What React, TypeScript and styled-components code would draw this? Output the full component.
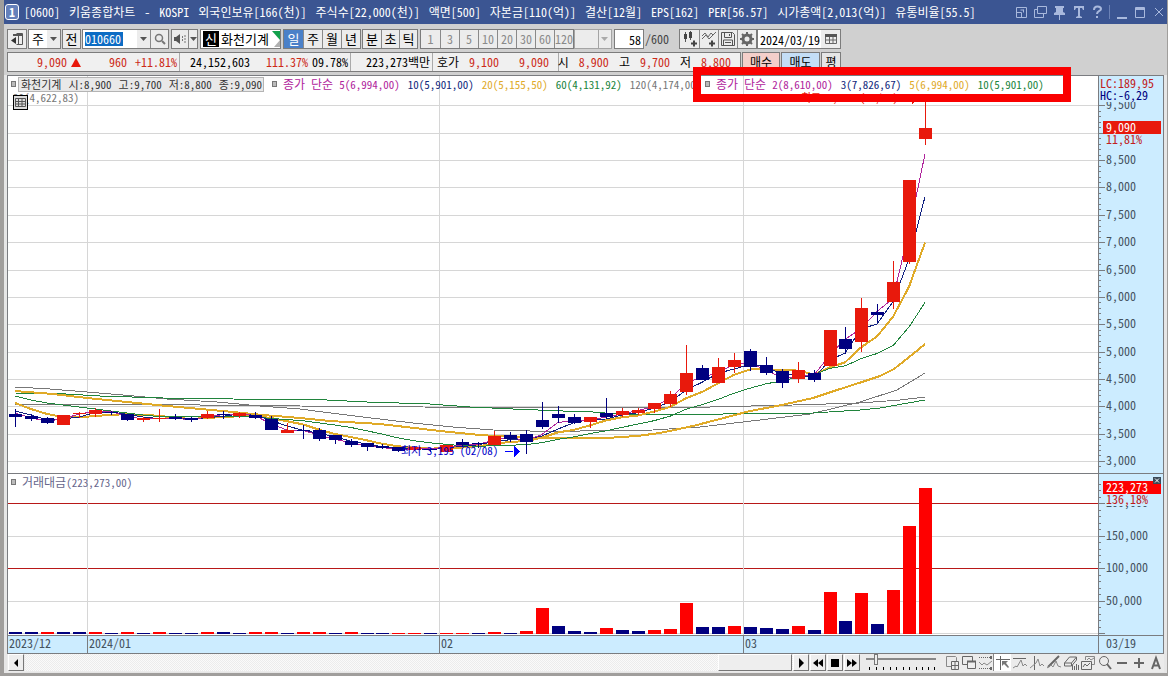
import React from 'react';
import styled, { createGlobalStyle } from 'styled-components';

const MONO = '"Noto Sans Mono CJK KR", "Noto Sans CJK KR", monospace';

const RED = '#e8190c';
const NAVY = '#000080';
const GOLD = '#e0aa28';
const GREEN = '#20843c';
const MAGENTA = '#b0249c';
const GRAY = '#777';
const SKY = '#ccecff';
const LINE = '#7a7c80';
const INK = '#44525e';

const Global = createGlobalStyle`
  *, *::before { box-sizing: border-box; }
  body { margin: 0; background: #a09e9c; font: 12px/16px ${MONO}; color: #000; }
  button, input, select { font: inherit; color: inherit; margin: 0; padding: 0; border: 0; border-radius: 0; }
  button { cursor: pointer; }
`;

const Window = styled.div`
  min-height: 100vh;
  display: flex;
  flex-direction: column;
  background: #e6e6e6;
  border: solid #a09e9c;
  border-width: 0 1px 3px 4px;
`;

/* ---------- title bar ---------- */

const TitleBar = styled.header`
  height: 24px;
  flex: none;
  display: flex;
  align-items: center;
  gap: 5px;
  padding: 0 0 0 1px;
  background: #3b5592;
  color: #fff;
`;

const Badge = styled.span`
  width: 14px;
  height: 16px;
  flex: none;
  border: 1px solid #fff;
  border-radius: 3px;
  background: #6480bb;
  font-weight: 700;
  line-height: 13px;
  text-align: center;
`;

const Title = styled.h1`
  flex: 1;
  min-width: 0;
  display: flex;
  gap: 9px;
  margin: 0;
  font-size: 12px;
  font-weight: 400;
  white-space: nowrap;
  overflow: hidden;
`;

const WindowButtons = styled.div`
  display: flex;
  align-items: center;
  gap: 4px;
`;

const WindowButton = styled.button`
  width: 15px;
  height: 16px;
  background: none;
  color: #a9b9dd;
  svg { display: block; width: 15px; height: 16px; }
`;

const TitleRule = styled.span`
  width: 1px;
  height: 14px;
  background: #6c82b6;
`;

/* ---------- tool bar ---------- */

const Tools = styled.div`
  flex: none;
  display: flex;
  flex-direction: column;
  gap: 3px;
  padding: 5px 3px 3px;
  background: #d0d0d0;
`;

const Bar = styled.div`
  display: flex;
  height: 20px;
`;

const Group = styled.div<{ $gap?: number }>`
  display: flex;
  flex: none;
  height: 20px;
  margin-right: ${p => p.$gap ?? 2}px;
  border: 1px solid #7c7c7c;
  background: #fff;
`;

const ToolButton = styled.button<{ $w: number; $on?: boolean; $dim?: boolean; $size?: number }>`
  width: ${p => p.$w}px;
  flex: none;
  height: 18px;
  display: flex;
  align-items: center;
  justify-content: center;
  overflow: hidden;
  background: ${p => (p.$on ? '#4a80c8' : '#ececec')};
  color: ${p => (p.$on ? '#fff' : p.$dim ? '#8a8a8a' : '#000')};
  font-size: ${p => p.$size ?? 12}px;
  line-height: 18px;
  & + & { border-left: 1px solid #8a8a8a; }
  svg { display: block; flex: none; }
`;

const Period = styled.span`
  width: 18px;
  text-align: center;
  font-size: 13px;
  line-height: 18px;
`;

const CodeInput = styled.input`
  width: 38px;
  height: 14px;
  margin: 2px 14px 2px 2px;
  background: #0c6cc4;
  color: #fff;
`;

const NewTag = styled.span`
  width: 16px;
  margin: 1px 2px;
  background: #000;
  color: #fff;
  font-size: 13px;
  line-height: 16px;
  text-align: center;
`;

const StockName = styled.span`
  width: 50px;
  font-size: 13px;
  line-height: 18px;
`;

const Corner = styled.svg`
  width: 9px;
  height: 18px;
`;

const EmptySelect = styled.select`
  width: 38px;
  height: 20px;
  appearance: none;
  flex: none;
  margin-right: 2px;
  border: 1px solid #a4a4a4;
  background: linear-gradient(#a4a4a4, #a4a4a4) 23px 0 / 1px 18px no-repeat, #ececec;
`;

const SelectWrap = styled.div`
  display: grid;
  flex: none;
  > * { grid-area: 1 / 1; }
  svg { align-self: center; justify-self: end; margin-right: 6px; pointer-events: none; }
`;

const CountInput = styled.input`
  width: 30px;
  flex: none;
  height: 20px;
  padding-right: 2px;
  border: 1px solid #7c7c7c;
  background: #fff;
  text-align: right;
`;

const Total = styled.span`
  width: 35px;
  flex: none;
  padding-left: 1px;
  color: #444;
  line-height: 20px;
`;

const DateInput = styled.input`
  width: 63px;
  height: 18px;
  padding-left: 2px;
  background: #fff;
`;

const Quotes = styled.dl`
  display: flex;
  flex: none;
  height: 20px;
  margin: 0 1px 0 0;
  border: 1px solid #7c7c7c;
  background: #f0f0f0;
`;

const QuoteCell = styled.div<{ $w: number; $gap?: number; $end?: number }>`
  width: ${p => p.$w}px;
  flex: none;
  display: flex;
  align-items: center;
  justify-content: flex-end;
  gap: ${p => p.$gap ?? 8}px;
  padding-right: ${p => p.$end ?? 2}px;
  & + & { border-left: 1px solid #aaa; }
  svg { margin: 0 20px 0 -4px; }
`;

const QuoteLabel = styled.dt`
  line-height: 18px;
`;

const QuoteValue = styled.dd<{ $up?: boolean; $w?: number }>`
  margin: 0;
  width: ${p => (p.$w ? `${p.$w}px` : 'auto')};
  text-align: right;
  white-space: nowrap;
  line-height: 18px;
  color: ${p => (p.$up ? '#cc2a18' : '#000')};
`;

const OrderButton = styled.button<{ $bg: string; $w: number }>`
  width: ${p => p.$w}px;
  height: 20px;
  margin-right: 1px;
  flex: none;
  border: 1px solid #7c7c7c;
  background: ${p => p.$bg};
`;

/* ---------- chart ---------- */

const Chart = styled.main`
  position: relative;
  flex: none;
  margin: 0 3px;
  display: grid;
  grid-template-columns: minmax(0, 1fr) 66px;
  border: solid ${LINE};
  border-width: 1px 0 0 1px;
`;

const Plot = styled.svg<{ $bg?: string }>`
  display: block;
  width: 100%;
  background: ${p => p.$bg ?? '#fff'};
  border-bottom: 1px solid ${LINE};
  shape-rendering: crispEdges;
  font-family: ${MONO};
`;

const Axis = styled(Plot)`
  background: ${SKY};
  border-left: 1px solid ${LINE};
  border-right: 1px solid ${LINE};
`;

const Legend = styled.div<{ $left: number; $top: number }>`
  position: absolute;
  left: ${p => p.$left}px;
  top: ${p => p.$top}px;
  height: 16px;
  display: flex;
  align-items: center;
  gap: 8px;
  font-size: 11px;
  white-space: nowrap;
`;

const LegendHead = styled.span<{ $c?: string }>`
  display: flex;
  align-items: center;
  gap: 6px;
  color: ${p => p.$c ?? '#000'};
  &::before { content: ''; width: 5px; height: 6px; border: 1px solid #777; background: #bbb; }
`;

const LegendName = styled.span`
  font-size: 12px;
`;

const LegendValue = styled.span<{ $c: string }>`
  color: ${p => p.$c};
`;

const Ohlc = styled.span`
  height: 15px;
  width: 246px;
  display: flex;
  gap: 7px;
  margin-left: -6px;
  padding-left: 2px;
  border: 1px solid #b4b4b4;
  background: #e9e9e9;
  color: #333;
  line-height: 13px;
`;

const TableToggle = styled.button`
  position: absolute;
  left: 5px;
  top: 19px;
  width: 15px;
  height: 15px;
  border: 1px solid #000;
  background: #dcdcdc;
  svg { display: block; }
`;

const Highlight = styled.div`
  position: absolute;
  left: 685px;
  top: -9px;
  width: 378px;
  height: 35px;
  border: 8px solid #fa0000;
`;

const CloseTiny = styled.button`
  position: absolute;
  right: 3px;
  top: 401px;
  width: 8px;
  height: 7px;
  background: #3c4a58;
  svg { display: block; }
`;

/* ---------- bottom bar ---------- */

const Footer = styled.footer`
  flex: none;
  height: 18px;
  margin: 0 3px;
  padding-left: 1px;
  display: flex;
  align-items: flex-start;
  background: #ebebeb;
`;

const StepButton = styled.button`
  width: 16px;
  height: 17px;
  flex: none;
  margin-right: 1px;
  display: grid;
  place-items: center;
  background: #eee;
  border: solid;
  border-width: 1px;
  border-color: #fff #777 #777 #fff;
`;

const Track = styled.div`
  flex: 1;
  height: 17px;
  display: flex;
  justify-content: flex-end;
  background: repeating-conic-gradient(#ececec 0 25%, #fafafa 0 50%) 0 0 / 2px 2px;
`;

const Thumb = styled.div`
  width: 74px;
  margin-right: 1px;
  background: #eee;
  border: solid;
  border-width: 1px;
  border-color: #fff #777 #777 #fff;
`;

const Zoomer = styled.label`
  width: 70px;
  margin: 0 7px 0 5px;
  display: flex;
  flex-direction: column;
  gap: 2px;
  svg { display: block; }
`;

const Range = styled.input`
  appearance: none;
  width: 70px;
  height: 11px;
  background: linear-gradient(#888, #888) 0 4px / 100% 2px no-repeat;
  &::-webkit-slider-thumb {
    appearance: none;
    width: 4px;
    height: 11px;
    border: 1px solid #777;
    background: #eee;
  }
`;

const IconStrip = styled.div`
  display: flex;
`;

const StripButton = styled.button<{ $on?: boolean }>`
  width: 17px;
  height: 17px;
  flex: none;
  display: grid;
  place-items: center;
  background: ${p => (p.$on ? '#fff' : 'none')};
  color: #666;
  box-shadow: ${p => (p.$on ? '-1px 0 #888' : 'none')};
`;

/* ---------- data ---------- */

// open/close edges and wick ends on the plot's vertical scale: [up, top, bottom, high, low]
const candles: [number, number, number, number, number][] = [
  [0, 414, 417, 409, 427], [0, 416, 419, 414, 421], [0, 418, 423, 417, 424], [1, 415, 425, 415, 425],
  [1, 413, 414, 412, 418], [1, 410, 414, 408, 417], [0, 412, 413, 411, 415], [0, 414, 420, 414, 421],
  [1, 418, 420, 417, 422], [1, 418, 419, 409, 422], [0, 417, 419, 414, 420], [0, 418, 420, 417, 422],
  [1, 414, 418, 411, 419], [0, 414, 415, 411, 419], [1, 413, 416, 412, 418], [0, 415, 418, 412, 419],
  [0, 419, 430, 416, 430], [1, 430, 433, 423, 433], [0, 430, 431, 425, 439], [0, 430, 439, 428, 441],
  [0, 435, 440, 435, 444], [0, 441, 445, 439, 447], [0, 443, 447, 443, 451], [0, 446, 448, 444, 449],
  [0, 447, 451, 447, 452], [1, 447, 450, 446, 451], [0, 449, 450, 448, 452], [1, 445, 452, 445, 452],
  [0, 442, 445, 439, 447], [0, 443, 444, 442, 448], [1, 436, 445, 431, 445], [0, 435, 439, 432, 442],
  [0, 434, 442, 430, 454], [0, 420, 427, 402, 429], [0, 414, 418, 406, 423], [0, 417, 423, 414, 424],
  [1, 417, 422, 417, 428], [0, 413, 417, 398, 419], [1, 411, 415, 408, 417], [1, 410, 413, 408, 415],
  [1, 403, 409, 403, 413], [1, 394, 404, 391, 407], [1, 373, 392, 345, 395], [0, 368, 380, 365, 380],
  [1, 367, 383, 358, 383], [1, 360, 367, 353, 373], [0, 351, 367, 349, 371], [0, 365, 373, 357, 375],
  [0, 371, 383, 369, 388], [1, 370, 379, 362, 383], [0, 373, 380, 370, 382], [1, 330, 366, 330, 366],
  [0, 339, 349, 327, 354], [1, 308, 342, 298, 352], [0, 312, 315, 304, 322], [1, 282, 302, 261, 309],
  [1, 180, 262, 180, 264], [1, 128, 139, 97, 145],
];

// negative heights are falling days
const volumes = [
  -2, -2, 2, -2, -2, 2, -1, 2, -1, 2, -1, -1, 2, -2, -1, 2, 2, -1, 2, 2, -1, 2, -1, -1, 1, 1, -1, 1, 1,
  -1, 2, -1, 3, 26, -8, -3, -2, 6, -4, -3, 4, 5, 31, -7, -7, 8, -7, -6, -5, 8, -4, 42, -13, 41, -10, 44,
  108, 146,
];

const cx = (i: number) => Math.round(15.3 + i * 15.965);
const closes = candles.map(([up, top, bottom]) => (up ? top : bottom));

const average = (n: number, lead: number[]) =>
  closes
    .map((_, i) => {
      const y = i < n - 1 ? lead[i] : closes.slice(i - n + 1, i + 1).reduce((a, b) => a + b, 0) / n;
      return `${cx(i)},${y.toFixed(1)}`;
    })
    .join(' ');

const ma2 = average(2, [413]);
const ma3 = average(3, [411, 415]);
const ma5 = average(5, [403, 409, 414, 417]);
const ma10 = average(10, [396, 400, 403, 405, 407, 409, 411, 413, 415]);
const ma20 =
  '15,391 53,394 87,398 127,402 167,406 200,409 233,412 263,415 300,418 330,421 380,424 440,431 480,435 530,438 560,438 607,438 637,436 660,433 693,426 720,419 750,411 777,406 813,398 837,390 862,382 880,376 894,369 913,354 925,344';
const ma60 =
  '15,393 66,394 100,396 163,398 233,399 327,400 367,402 430,404 470,407 513,409 563,411 593,412 617,414 723,414 813,413 860,410 880,408 925,400';
const ma120 = '15,404 200,405 300,406 423,407 580,408 710,407 793,405 860,403 900,400 925,397';
const ma40 =
  '15,387 50,389 87,392 123,395 167,399 217,402 260,406 300,409 323,412 363,417 413,423 453,427 493,430 530,431 580,431 653,430 700,427 743,422 810,414 860,402 897,390 925,373';

const months = [
  { x: 7, label: '2023/12' },
  { x: 87, label: '2024/01' },
  { x: 439, label: '02' },
  { x: 743, label: '03' },
];

const priceY = (p: number) => Math.round(105.4 + (9500 - p) * 0.0547);
const prices = Array.from({ length: 14 }, (_, i) => 9500 - i * 500);
const labelledPrices = prices.filter(p => p !== 9000);
const priceTicks = Array.from({ length: 68 }, (_, i) => 9600 - i * 100);
const volumeY = (v: number) => Math.round(633 - v * 0.65);
const volumeTicks = Array.from({ length: 24 }, (_, i) => i * 10);

/* ---------- icons ---------- */

const Down = ({ c = '#555' }: { c?: string }) => (
  <svg width="7" height="4" viewBox="0 0 7 4"><path d="M0 0h7L3.5 4z" fill={c} /></svg>
);

const titleIcons: [string, React.ReactNode][] = [
  ['배치', <path key="p" d="M2.500 3.500h10v10h-10zM2.500 8.500h5v5M9.500 5.500v3M9.500 6h-3" fill="none" stroke="currentColor" />],
  ['복제', <path key="p" d="M4.500 2.500h9v7h-9zM4 5.500H1.500v8h9V10" fill="none" stroke="currentColor" />],
  ['고정', <path key="p" d="M3 2h9v2h-1v4l2 1v2H8v5H7v-5H2V9l2-1V4H3z" fill="currentColor" />],
];

const boxedIcons = [
  <svg key="a" width="16" height="16" viewBox="0 0 16 16">
    <path d="M3.500 1v10M8.500 0v9" stroke="#555" /><path d="M2 3h3v5H2zM7 1h3v6H7z" fill="#444" />
    <path d="M9 12.500h6M12 9.500v6" stroke="#444" strokeWidth="2" />
  </svg>,
  <svg key="b" width="16" height="16" viewBox="0 0 16 16">
    <path d="M1 5l3-3 3 4 3-4 2 2 3-3M1 8l4-4 3 4 4-4" fill="none" stroke="#666" />
    <path d="M8 12.500h6M11 9.500v6" stroke="#444" strokeWidth="2" />
  </svg>,
  <svg key="c" width="16" height="16" viewBox="0 0 16 16">
    <path d="M1.500 1.500h11l2 2v11h-13zM4.500 1.500v5h7v-5M3.500 14v-5h9v5M5 11.500h6M9.500 3v2" fill="none" stroke="#555" />
  </svg>,
  <svg key="d" width="16" height="16" viewBox="0 0 16 16">
    <circle cx="8" cy="8" r="4" fill="none" stroke="#666" strokeWidth="3" />
    <path d="M8 1v3M8 12v3M1 8h3M12 8h3M3 3l2 2M11 11l2 2M13 3l-2 2M3 13l2-2" stroke="#666" strokeWidth="2" />
  </svg>,
];

const stripIcons: [string, React.ReactNode][] = [
  ['추가', (
    <g key="p">
      <path d="M2.500 1.500h9l1 1v9h-10z" stroke="#888" />
      <path d="M7.500 6.500h7v8h-7z" fill="#eee" /><path d="M11 7v7M8 10.500h6" />
    </g>
  )],
  ['겹침', (
    <g key="p">
      <path d="M1.500 1.500h10v8h-10z" />
      <path d="M6.500 6.500h8v7h-8z" fill="#eee" /><path d="M6 6.500h9" strokeWidth="2" />
    </g>
  )],
  ['영역', (
    <g key="p">
      <path d="M1 2.500h11M1 13.500h11" strokeDasharray="1 1" /><path d="M13 1v3M13 12v3" strokeWidth="2" />
      <path d="M1 7l3 3 2-2 3 2 5-4" stroke="#888" />
    </g>
  )],
  ['십자', (
    <g key="p">
      <path d="M1 4.500h14M5.500 1v14" /><path d="M7 6h6l-2 2 3 4-1 1-4-4-2 2z" fill="#777" stroke="none" />
    </g>
  )],
  ['수평', <g key="p"><path d="M1 3.500h13" /><path d="M1 13l3-2 1 1 4-7 2 6 2-2 2 2" stroke="#888" /></g>],
  ['수직', <g key="p"><path d="M5.500 1v14" /><path d="M1 13l6-5 2-4 2 7 2-2 2 2" stroke="#888" /></g>],
  ['추세', <g key="p"><path d="M2 12L13 1" strokeWidth="2" /><path d="M1 13l4-3 2 2 3-6 2 5 3 1" stroke="#888" /></g>],
  ['지우개', (
    <g key="p">
      <path d="M1.500 8l5-6h7v3l-5 6h-7zM1.500 8h7l5-6M8.500 8v3" /><path d="M9.500 15v-5M11.500 15v-4M13.500 15v-6M15.500 15v-5" />
    </g>
  )],
  ['차트', (
    <g key="p">
      <path d="M5.500 5V1.500h9v8H12M7 5l2-2 2 2 3-2" stroke="#888" /><path d="M1.500 6.500h10v8h-10zM3 12l2-3 2 2 3-3" />
    </g>
  )],
  ['돋보기', <g key="p"><circle cx="7" cy="6" r="4.500" /><path d="M10 9l4 5" strokeWidth="2" /></g>],
  ['축소', <path key="p" d="M3 8h10" strokeWidth="2" />],
  ['확대', <path key="p" d="M3 8h10M8 3v10" strokeWidth="2" />],
];

const steps: [string, string][] = [
  ['다음', 'M3 0l5 5-5 5z'],
  ['뒤로', 'M5 1v8L0 5zM10 1v8L5 5z'],
  ['정지', 'M1 1h8v8H1z'],
  ['앞으로', 'M0 1v8l5-4zM5 1v8l5-4z'],
];

/* ---------- parts ---------- */

const VLines = ({ from, to }: { from: number; to: number }) => (
  <>
    {months.slice(1).map(m => (
      <rect key={m.x} x={m.x} y={from} width={1} height={to - from} fill="#d6d6d6" />
    ))}
  </>
);

const PricePlot = () => (
  <Plot height={398}>
    <g transform="translate(-8 -76)" fill="none">
      {prices.map(p => (
        <rect key={p} x={8} y={priceY(p)} width="100%" height={1} fill="#d6d6d6" />
      ))}
      <VLines from={76} to={474} />
      <polyline points={ma120} stroke={GRAY} />
      <polyline points={ma40} stroke={GRAY} />
      <polyline points={ma60} stroke={GREEN} />
      <polyline points={ma20} stroke={GOLD} strokeWidth={2} />
      <polyline points={ma5} stroke={GOLD} strokeWidth={2} />
      <polyline points={ma10} stroke={GREEN} />
      <polyline points={ma3} stroke="#102080" />
      <polyline points={ma2} stroke={MAGENTA} />
      {candles.map(([up, top, bottom, high, low], i) => (
        <g key={i} fill={up ? RED : NAVY}>
          <rect x={cx(i)} y={high} width={1} height={low - high} />
          <rect x={cx(i) - 6} y={top} width={13} height={bottom - top} />
        </g>
      ))}
      <text x={401} y={455} fill="#0000c8" fontSize={11}>최저 3,195 (02/08)</text>
      <path d="M505 451.500h8" stroke="#00f" />
      <path d="M514 446v11l6-5.500z" fill="#00f" />
      <text x={801} y={102} fill={RED} fontSize={11}>최고 9,780 (03/19)</text>
      <path d="M912 95v9l6-4z" fill={RED} />
    </g>
  </Plot>
);

const PriceAxis = () => (
  <Axis height={398} fontSize={12}>
    <g transform="translate(-1099 -76)" fill={INK}>
      {priceTicks.map(p => (
        <rect key={p} x={1099} y={priceY(p)} width={p % 500 ? 2 : 6} height={1} fill={LINE} />
      ))}
      {labelledPrices.map(p => (
        <text key={p} x={1106} y={priceY(p) + 4}>{p.toLocaleString('en-US')}</text>
      ))}
      <rect x={1099} y={76} width={64} height={26} fill={SKY} />
      <text x={1100} y={88} fill="#c02020">LC:189,95</text>
      <text x={1100} y={100} fill={NAVY}>HC:-6,29</text>
      <rect x={1103} y={134} width={58} height={11} fill={SKY} />
      <rect x={1103} y={121} width={58} height={13} fill={RED} />
      <text x={1106} y={132} fill="#fff">9,090</text>
      <text x={1106} y={144} fill="#c02020">11,81%</text>
    </g>
  </Axis>
);

const VolumePlot = () => (
  <Plot height={162}>
    <g transform="translate(-8 -474)" fill="none">
      {[0, 50, 100, 150, 200].map(v => (
        <rect key={v} x={8} y={volumeY(v)} width="100%" height={1} fill={v === 100 || v === 200 ? '#b81818' : '#d6d6d6'} />
      ))}
      <VLines from={474} to={636} />
      {volumes.map((v, i) => (
        <rect key={i} x={cx(i) - 6} y={634 - Math.abs(v)} width={13} height={Math.abs(v)} fill={v > 0 ? '#fe0000' : NAVY} />
      ))}
    </g>
  </Plot>
);

const VolumeAxis = () => (
  <Axis height={162} fontSize={12}>
    <g transform="translate(-1099 -474)" fill={INK}>
      {volumeTicks.map(v => (
        <rect key={v} x={1099} y={volumeY(v)} width={v % 50 ? 2 : 6} height={1} fill={LINE} />
      ))}
      {[200, 150, 100, 50].map(v => (
        <text key={v} x={1106} y={volumeY(v) + 4}>{`${v},000`}</text>
      ))}
      <rect x={1105} y={494} width={56} height={12} fill={SKY} />
      <rect x={1103} y={481} width={58} height={13} fill="#fe0000" />
      <text x={1106} y={492} fill="#fff">223,273</text>
      <text x={1106} y={504} fill="#c01818">136,18%</text>
    </g>
  </Axis>
);

const titleFields = [
  '[0600]', '키움종합차트', '-', 'KOSPI', '외국인보유[166(천)]', '주식수[22,000(천)]', '액면[500]', '자본금[110(억)]',
  '결산[12월]', 'EPS[162]', 'PER[56.57]', '시가총액[2,013(억)]', '유통비율[55.5]',
];

const mainAverages: [string, string][] = [
  ['10(5,901,00)', '#10287c'],
  ['20(5,155,50)', GOLD],
  ['60(4,131,92)', GREEN],
  ['120(4,174,00)', GRAY],
];

const shortAverages: [string, string][] = [
  ['3(7,826,67)', '#10287c'],
  ['5(6,994,00)', GOLD],
  ['10(5,901,00)', GREEN],
];

export default function App() {
  return (
    <>
      <Global />
      <Window>
        <TitleBar>
          <Badge>1</Badge>
          <Title>{titleFields.map(f => <span key={f}>{f}</span>)}</Title>
          <WindowButtons>
            {titleIcons.map(([name, icon]) => (
              <WindowButton key={name} aria-label={name}><svg viewBox="0 0 15 16">{icon}</svg></WindowButton>
            ))}
            <WindowButton aria-label="글꼴">
              <svg viewBox="0 0 15 16"><path d="M3 2h10v4h-1l-1-2H9v8l2 1v1H5v-1l2-1V4H5L4 6H3z" fill="currentColor" /></svg>
            </WindowButton>
            <WindowButton aria-label="도움말">
              <svg viewBox="0 0 15 16"><path d="M4 6c0-5 7-4 7-1 0 2-4 2-4 5M7 12v2" fill="none" stroke="currentColor" strokeWidth="2" /></svg>
            </WindowButton>
            <TitleRule />
            <WindowButton aria-label="최소화"><svg viewBox="0 0 15 16"><path d="M3 13h10v2H3z" fill="currentColor" /></svg></WindowButton>
            <WindowButton aria-label="최대화">
              <svg viewBox="0 0 15 16"><path d="M2.500 3.500h9v10h-9zM2 4.500h10M2 5.500h10" fill="none" stroke="currentColor" /></svg>
            </WindowButton>
            <WindowButton aria-label="닫기"><svg viewBox="0 0 15 16"><path d="M3 4l8 8M11 4l-8 8" stroke="currentColor" /></svg></WindowButton>
          </WindowButtons>
        </TitleBar>

        <Tools>
          <Bar>
            <Group $gap={1}>
              <ToolButton $w={18} aria-label="목록">
                <svg width="14" height="14" viewBox="0 0 14 14">
                  <path d="M6.500 1.500h6v11h-6" fill="none" stroke="#555" /><path d="M3 2h10v2H3zM8 4h1v8H8z" fill="#555" />
                  <path d="M6 5v7L1 8.500z" fill="#333" />
                </svg>
              </ToolButton>
            </Group>
            <Group $gap={1}>
              <Period>주</Period>
              <ToolButton $w={13} aria-label="주기 선택"><Down /></ToolButton>
            </Group>
            <Group $gap={1}>
              <ToolButton $w={17} $size={13}>전</ToolButton>
            </Group>
            <Group>
              <CodeInput aria-label="종목코드" defaultValue="010660" />
              <ToolButton $w={13} aria-label="종목 목록"><Down /></ToolButton>
              <ToolButton $w={18} aria-label="검색">
                <svg width="14" height="14" viewBox="0 0 14 14">
                  <circle cx="6" cy="6" r="3.500" fill="none" stroke="#777" strokeWidth="1.500" /><path d="M9 9l3 3" stroke="#777" strokeWidth="2" />
                </svg>
              </ToolButton>
            </Group>
            <Group>
              <ToolButton $w={16} aria-label="소리">
                <svg width="14" height="12" viewBox="0 0 14 12">
                  <path d="M1 4h2l4-3v10L3 8H1z" fill="#555" /><path d="M9.500 3v6M12 2v8" stroke="#777" strokeDasharray="2 1" />
                </svg>
              </ToolButton>
              <ToolButton $w={9} aria-label="소리 선택"><Down /></ToolButton>
            </Group>
            <Group>
              <NewTag>신</NewTag>
              <StockName>화천기계</StockName>
              <Corner viewBox="0 0 9 18"><path d="M1 1h8v9z" fill="#12a04c" /><path d="M9 10v7H3z" fill="#b0b0b0" /></Corner>
            </Group>
            <Group $gap={1}>
              {['일', '주', '월', '년'].map((t, i) => (
                <ToolButton key={t} $w={19} $on={i === 0} $size={13}>{t}</ToolButton>
              ))}
            </Group>
            <Group>
              {['분', '초', '틱'].map(t => (
                <ToolButton key={t} $w={18} $size={13}>{t}</ToolButton>
              ))}
            </Group>
            <Group $gap={0}>
              {[1, 3, 5, 10, 20, 30, 60, 120].map(n => (
                <ToolButton key={n} $w={19} $dim>{n}</ToolButton>
              ))}
            </Group>
            <SelectWrap>
              <EmptySelect aria-label="분 단위"><option></option></EmptySelect>
              <Down c="#aaa" />
            </SelectWrap>
            <CountInput aria-label="표시 개수" defaultValue="58" />
            <Total>/600</Total>
            <Group $gap={0}>
              {boxedIcons.map((icon, i) => (
                <ToolButton key={i} $w={19} aria-label={['봉 추가', '지표 추가', '저장', '설정'][i]}>{icon}</ToolButton>
              ))}
            </Group>
            <Group>
              <DateInput aria-label="날짜" defaultValue="2024/03/19" />
              <ToolButton $w={19} aria-label="달력">
                <svg width="12" height="12" viewBox="0 0 12 12">
                  <path d="M.5 1.500h11v9H.5zM4.500 3v8M8 3v8M1 7h10" fill="none" stroke="#666" /><path d="M0 1h12v3H0z" fill="#555" />
                </svg>
              </ToolButton>
            </Group>
          </Bar>

          <Bar>
            <Quotes>
              <QuoteCell $w={171}>
                <QuoteValue $up>9,090</QuoteValue>
                <svg width="10" height="9" viewBox="0 0 10 9"><path d="M5 0l5 9H0z" fill={RED} /></svg>
                <QuoteValue $up>960</QuoteValue>
                <QuoteValue $up>+11.81%</QuoteValue>
              </QuoteCell>
              <QuoteCell $w={171} $gap={4}>
                <QuoteValue>24,152,603</QuoteValue>
                <QuoteValue $up $w={54}>111.37%</QuoteValue>
                <QuoteValue>09.78%</QuoteValue>
              </QuoteCell>
              <QuoteCell $w={82}><QuoteValue>223,273백만</QuoteValue></QuoteCell>
              <QuoteCell $w={126} $end={9}>
                <QuoteLabel>호가</QuoteLabel>
                <QuoteValue $up $w={32}>9,100</QuoteValue>
                <QuoteValue $up $w={42}>9,090</QuoteValue>
              </QuoteCell>
              <QuoteCell $w={182} $gap={10} $end={9}>
                <QuoteLabel>시</QuoteLabel><QuoteValue $up>8,900</QuoteValue>
                <QuoteLabel>고</QuoteLabel><QuoteValue $up>9,700</QuoteValue>
                <QuoteLabel>저</QuoteLabel><QuoteValue $up>8,800</QuoteValue>
              </QuoteCell>
            </Quotes>
            <OrderButton $bg="#f4cfca" $w={38}>매수</OrderButton>
            <OrderButton $bg="#c4def6" $w={39}>매도</OrderButton>
            <OrderButton $bg="#e6e6e6" $w={20}>평</OrderButton>
          </Bar>
        </Tools>

        <Chart>
          <PricePlot />
          <PriceAxis />
          <VolumePlot />
          <VolumeAxis />
          <Plot height={18} $bg={SKY} fontSize={12}>
            <g transform="translate(-8 0)" fill={INK}>
              {months.map((m, i) => (
                <g key={m.label}>
                  {i > 0 && <rect x={m.x} y={0} width={1} height={18} fill={LINE} />}
                  <text x={m.x + 2} y={12}>{m.label}</text>
                </g>
              ))}
            </g>
          </Plot>
          <Axis height={18} fontSize={12}><text x={7} y={12} fill={INK}>03/19</text></Axis>

          <Legend $left={3} $top={0}>
            <LegendHead />
            <Ohlc>
              <span>화천기계</span><span>시:8,900</span><span>고:9,700</span><span>저:8,800</span><span>종:9,090</span>
            </Ohlc>
            <LegendHead $c={MAGENTA}><LegendName>종가 단순</LegendName>5(6,994,00)</LegendHead>
            {mainAverages.map(([t, c]) => <LegendValue key={t} $c={c}>{t}</LegendValue>)}
          </Legend>
          <Legend $left={5} $top={13}><LegendValue $c={GRAY}>20(4,622,83)</LegendValue></Legend>
          <Legend $left={697} $top={0}>
            <LegendHead $c={MAGENTA}><LegendName>종가 단순</LegendName>2(8,610,00)</LegendHead>
            {shortAverages.map(([t, c]) => <LegendValue key={t} $c={c}>{t}</LegendValue>)}
          </Legend>
          <Highlight />
          <TableToggle aria-label="표 보기">
            <svg width="13" height="13" viewBox="0 0 13 13">
              <path d="M1.500 2.500h10v8h-10zM1.500 5.500h10M1.500 8h10M4.500 3v8M8 3v8" fill="none" stroke="#555" />
            </svg>
          </TableToggle>
          <Legend $left={3} $top={398}>
            <LegendHead $c="#66668c"><span><LegendName>거래대금</LegendName>(223,273,00)</span></LegendHead>
          </Legend>
          <CloseTiny aria-label="지표 닫기">
            <svg width="8" height="7" viewBox="0 0 8 7"><path d="M2 1.500l4 4M6 1.500l-4 4" stroke="#fff" /></svg>
          </CloseTiny>
        </Chart>

        <Footer>
          <StepButton aria-label="왼쪽으로">
            <svg width="10" height="10" viewBox="0 0 10 10"><path d="M7 1v8L3 5z" /></svg>
          </StepButton>
          <Track><Thumb /></Track>
          {steps.map(([name, d]) => (
            <StepButton key={name} aria-label={name}>
              <svg width="10" height="10" viewBox="0 0 10 10"><path d={d} /></svg>
            </StepButton>
          ))}
          <Zoomer aria-label="확대 비율">
            <Range type="range" min={0} max={100} defaultValue={12} />
            <svg width="70" height="3" viewBox="0 0 70 3">
              <path d="M3.500 0v3M10.500 0v3M17.500 0v3M24.500 0v3M30.500 0v3M37.500 0v3M43.500 0v3M50.500 0v3M56.500 0v3M62.500 0v3M68.500 0v3" stroke="#000" />
            </svg>
          </Zoomer>
          <IconStrip>
            {stripIcons.map(([name, icon], i) => (
              <StripButton key={name} aria-label={name} $on={i === 3}>
                <svg width="16" height="16" viewBox="0 0 16 16" fill="none" stroke="currentColor">{icon}</svg>
              </StripButton>
            ))}
            <StripButton aria-label="자동">
              <svg width="16" height="16" viewBox="0 0 16 16" fill="none" stroke="currentColor" strokeWidth="2"><path d="M4 14L8 3l4 11M5.500 10.500h5" /></svg>
            </StripButton>
          </IconStrip>
        </Footer>
      </Window>
    </>
  );
}
